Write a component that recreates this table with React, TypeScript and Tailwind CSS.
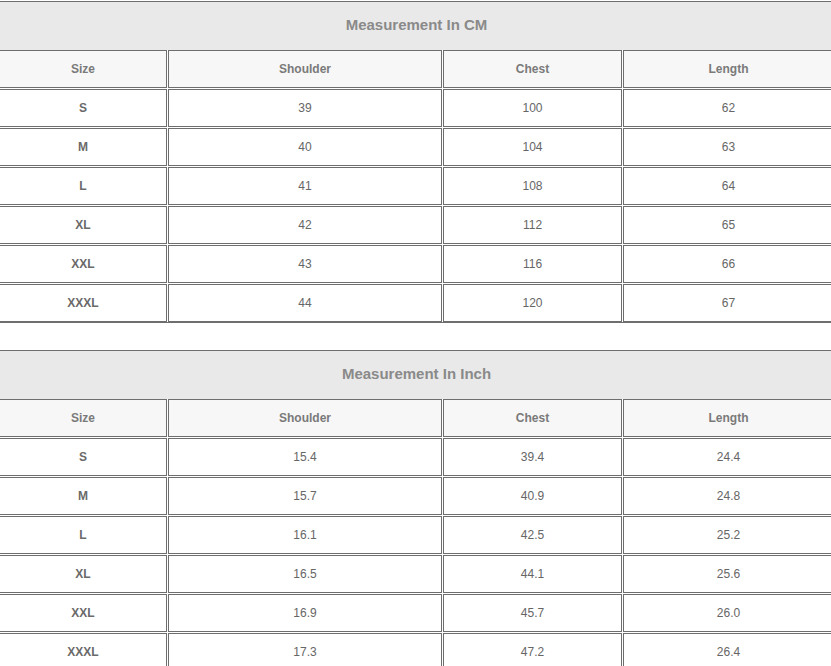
const cols = ["w-[168px]", "w-[274px]", "w-[179px]", "w-[211px]"];

const cm = [
  ["S", "39", "100", "62"],
  ["M", "40", "104", "63"],
  ["L", "41", "108", "64"],
  ["XL", "42", "112", "65"],
  ["XXL", "43", "116", "66"],
  ["XXXL", "44", "120", "67"],
];

const inch = [
  ["S", "15.4", "39.4", "24.4"],
  ["M", "15.7", "40.9", "24.8"],
  ["L", "16.1", "42.5", "25.2"],
  ["XL", "16.5", "44.1", "25.6"],
  ["XXL", "16.9", "45.7", "26.0"],
  ["XXXL", "17.3", "47.2", "26.4"],
];

const SizeTable = ({ title, rows }: { title: string; rows: string[][] }) => {
  return (
    <div className="border-b border-[#6e6e6e]">
      <div className="h-[49px] border-t border-[#6e6e6e] bg-[#e9e9e9] flex items-center justify-center pb-[2px] text-[15px] font-bold text-[#8a8a8a]">
        {title}
      </div>
      <div className="flex flex-col gap-[1px]">
        <div className="flex gap-[1px]">
          {["Size", "Shoulder", "Chest", "Length"].map((h, i) => (
            <div
              key={h}
              className={`${cols[i]} shrink-0 h-[38px] border border-[#6e6e6e] bg-[#f7f7f7] flex items-center justify-center text-[12px] font-bold text-[#7a7a7a]`}
            >
              {h}
            </div>
          ))}
        </div>
        {rows.map((r) => (
          <div key={r[0]} className="flex gap-[1px]">
            {r.map((v, i) => (
              <div
                key={i}
                className={`${cols[i]} shrink-0 h-[38px] border border-[#6e6e6e] bg-white flex items-center justify-center text-[12px] ${i === 0 ? "font-bold text-[#6a6a6a]" : "text-[#666]"}`}
              >
                {v}
              </div>
            ))}
          </div>
        ))}
      </div>
    </div>
  );
};

export default function App() {
  return (
    <div className="w-[831px] h-[666px] overflow-hidden bg-white font-['Liberation_Sans',Arial,sans-serif]">
      <div className="ml-[-1px] w-[835px] pt-[1px]">
        <SizeTable title="Measurement In CM" rows={cm} />
        <div className="mt-[27px]">
          <SizeTable title="Measurement In Inch" rows={inch} />
        </div>
      </div>
    </div>
  );
}
